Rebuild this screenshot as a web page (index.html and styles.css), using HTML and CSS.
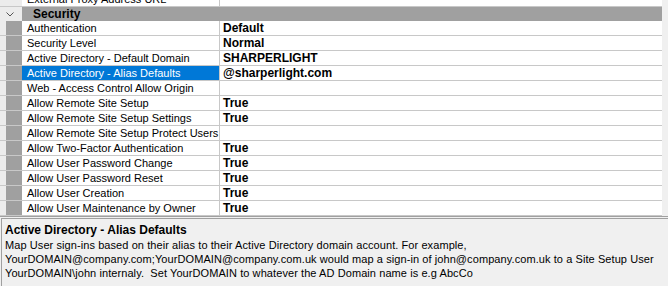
FILE: index.html
```html
<!DOCTYPE html>
<html lang="en">
<head>
    <meta charset="UTF-8">
    <meta name="viewport" content="width=device-width, initial-scale=1.0">
    <title>Property Grid</title>
    <link rel="stylesheet" href="styles.css">
</head>
<body>
    <div class="frame">
        <div class="grid">
            <div class="row first">
                <div class="gutter pale"></div>
                <div class="name">External Proxy Address URL</div>
                <div class="value"></div>
            </div>
            <div class="cat">
                <div class="gutter">
                    <svg width="8" height="5" viewBox="0 0 8 5"><polyline points="0.5,0.5 4,4 7.5,0.5" fill="none" stroke="#555" stroke-width="1"/></svg>
                </div>
                <div class="cat-name">Security</div>
            </div>
            <div class="row">
                <div class="gutter"></div>
                <div class="name">Authentication</div>
                <div class="value">Default</div>
            </div>
            <div class="row">
                <div class="gutter"></div>
                <div class="name">Security Level</div>
                <div class="value">Normal</div>
            </div>
            <div class="row">
                <div class="gutter"></div>
                <div class="name">Active Directory - Default Domain</div>
                <div class="value">SHARPERLIGHT</div>
            </div>
            <div class="row">
                <div class="gutter"></div>
                <div class="name selected">Active Directory - Alias Defaults</div>
                <div class="value">@sharperlight.com</div>
            </div>
            <div class="row">
                <div class="gutter"></div>
                <div class="name">Web - Access Control Allow Origin</div>
                <div class="value"></div>
            </div>
            <div class="row">
                <div class="gutter"></div>
                <div class="name">Allow Remote Site Setup</div>
                <div class="value">True</div>
            </div>
            <div class="row">
                <div class="gutter"></div>
                <div class="name">Allow Remote Site Setup Settings</div>
                <div class="value">True</div>
            </div>
            <div class="row">
                <div class="gutter"></div>
                <div class="name">Allow Remote Site Setup Protect Users</div>
                <div class="value"></div>
            </div>
            <div class="row">
                <div class="gutter"></div>
                <div class="name">Allow Two-Factor Authentication</div>
                <div class="value">True</div>
            </div>
            <div class="row">
                <div class="gutter"></div>
                <div class="name">Allow User Password Change</div>
                <div class="value">True</div>
            </div>
            <div class="row">
                <div class="gutter"></div>
                <div class="name">Allow User Password Reset</div>
                <div class="value">True</div>
            </div>
            <div class="row">
                <div class="gutter"></div>
                <div class="name">Allow User Creation</div>
                <div class="value">True</div>
            </div>
            <div class="row">
                <div class="gutter"></div>
                <div class="name">Allow User Maintenance by Owner</div>
                <div class="value">True</div>
            </div>
        </div>
        <div class="scroll"></div>
    </div>

    <div class="desc">
        <div class="desc-title">Active Directory - Alias Defaults</div>
        <p>Map User sign-ins based on their alias to their Active Directory domain account. For example,<br>
        YourDOMAIN@company.com;YourDOMAIN@company.com.uk would map a sign-in of john@company.com.uk to a Site Setup User<br>
        YourDOMAIN\john internaly.&nbsp; Set YourDOMAIN to whatever the AD Domain name is e.g AbcCo</p>
    </div>
</body>
</html>
```

FILE: styles.css
```css
body{
    margin: 0;
    background-color: #f0f0f0;
    font-family: "Liberation Sans", Arial, sans-serif;
    font-size: 11px;
    color: #000;
    overflow: hidden;
}
.frame{
    display: flex;
    margin-top: -8px;
    height: 224px;
    border-bottom: 1px solid #a0a0a0;
}
.grid{
    width: 662px;
    background-color: #fff;
}
.scroll{
    flex: 1;
    background-color: #f0f0f0;
}
.row{
    display: grid;
    grid-template-columns: 22px 198px 1fr;
    height: 14px;
    border-bottom: 1px solid #c8c8c8;
    line-height: 14px;
}
.gutter{
    background-color: #a0a0a0;
    border-left: 6px solid #ececec;
}
.gutter.pale{
    background-color: #ececec;
}
.name{
    padding-left: 5px;
    white-space: nowrap;
    overflow: hidden;
    border-right: 1px solid #c8c8c8;
}
.name.selected{
    background-color: #0078d7;
    color: #fff;
}
.value{
    padding-left: 3px;
    font-weight: bold;
    font-size: 12px;
    white-space: nowrap;
}
.cat{
    display: grid;
    grid-template-columns: 22px 1fr;
    height: 14px;
    line-height: 14px;
    background-color: #a0a0a0;
}
.cat .gutter{
    background-color: #ececec;
    border-left: 0;
    display: flex;
    align-items: center;
    justify-content: center;
    padding-right: 3px;
}
.cat-name{
    padding-left: 11px;
    font-weight: bold;
    font-size: 12px;
}
.desc{
    margin-top: 1px;
    border-top: 1px solid #a0a0a0;
    border-left: 1px solid #a0a0a0;
    margin-left: 1px;
    height: 100px;
    padding: 4px 0 0 3px;
}
.desc-title{
    font-weight: bold;
    font-size: 12px;
    line-height: 15px;
}
.desc p{
    margin: 0;
    line-height: 14px;
    white-space: nowrap;
    letter-spacing: 0.08px;
}
```
